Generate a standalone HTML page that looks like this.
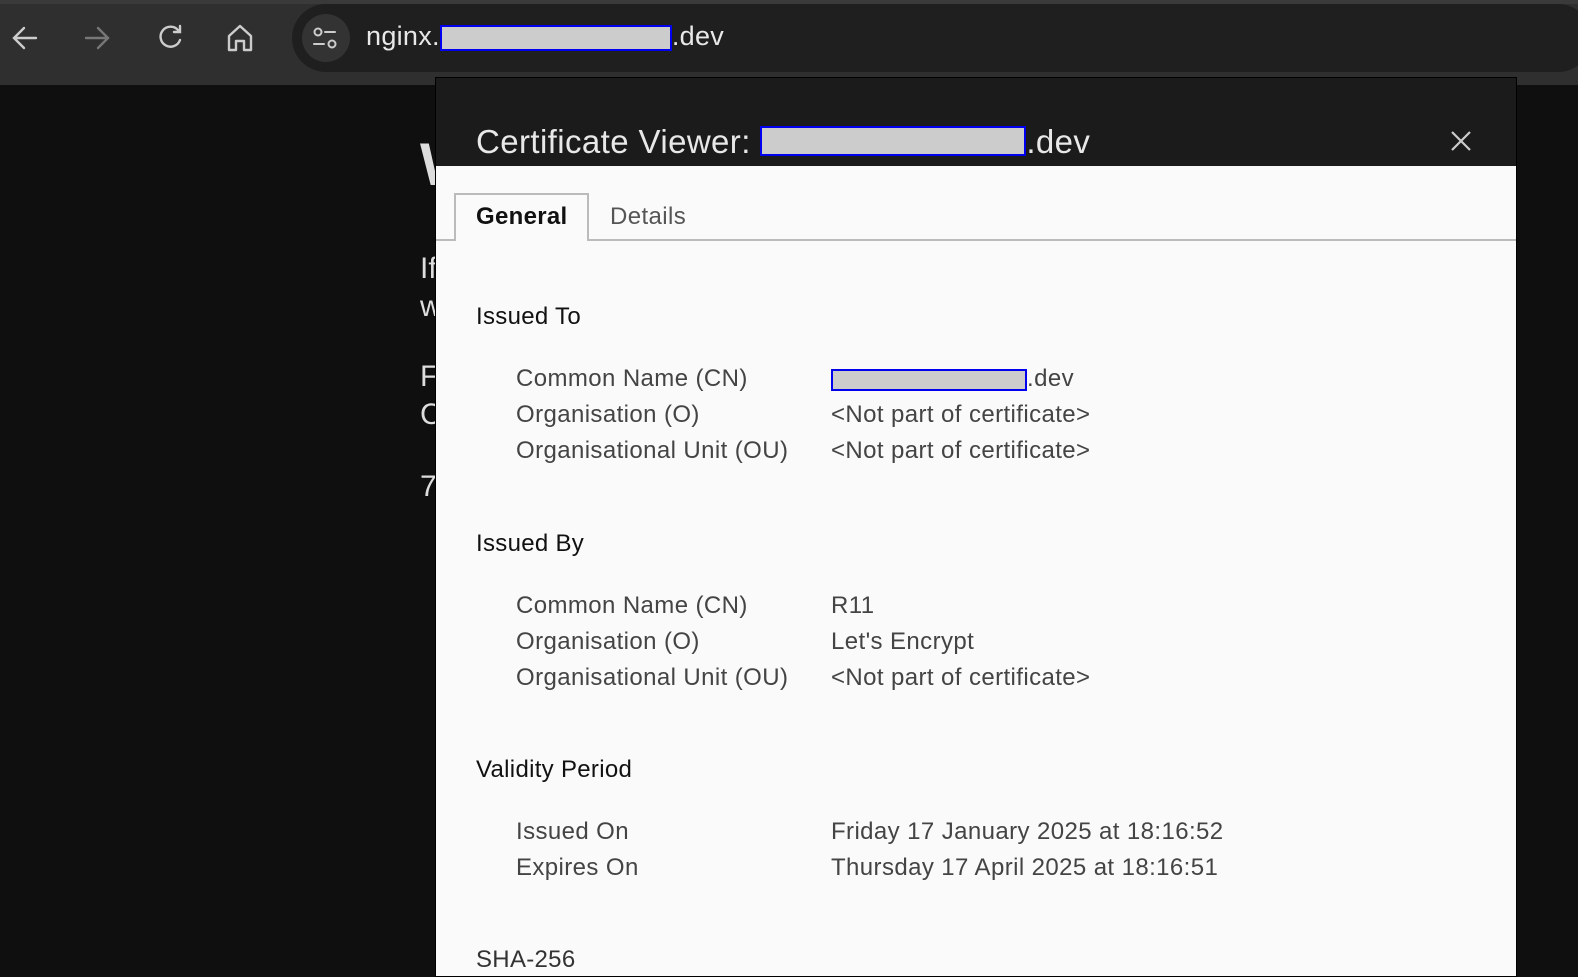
<!DOCTYPE html>
<html><head><style>
*{margin:0;padding:0;box-sizing:border-box}
body{width:1578px;height:958px;overflow:hidden;background:#0f0f0f;font-family:"Liberation Sans",sans-serif;position:relative}
.tb{position:absolute;left:0;top:0;width:1578px;height:85px;background:#2f2f2f;border-top:4px solid #3a3a3a}
.omni{position:absolute;left:292px;top:4px;width:1300px;height:68px;background:#1f1f1f;border-radius:34px}
.tune{position:absolute;left:302px;top:14px;width:48px;height:48px;border-radius:24px;background:#333}
.url{position:absolute;left:366px;top:21px;font-size:27px;color:#e8e8e8;letter-spacing:0.3px}
.red{display:inline-block;background:#ccc;border:2px solid #0000ee;vertical-align:middle}
.bg{position:absolute;color:#ddd;font-family:"Liberation Sans",sans-serif;font-size:30px;left:420px}
.dlg{position:absolute;left:435px;top:77px;width:1082px;height:900px;background:#fafafa;border:1px solid #000}
.hd{position:absolute;left:0;top:0;width:1080px;height:88px;background:#1b1b1b}
.title{position:absolute;left:40px;top:45px;font-size:33px;color:#e8e8e8;letter-spacing:0.4px}
.t{position:absolute;font-size:24px;color:#444;letter-spacing:0.4px}
.h{position:absolute;font-size:24px;color:#111;left:40px;letter-spacing:0.3px}
</style></head><body>
<div class="tb"></div>
<div class="omni"></div>
<div class="tune"></div>
<svg style="position:absolute;left:0;top:0" width="360" height="80" fill="none" stroke-width="2.4" stroke-linecap="round">
<path d="M36 38H14M24 28l-10 10 10 10" stroke="#ccc"/>
<path d="M86 38h22M98 28l10 10-10 10" stroke="#777"/>
<path d="M178 30a10 10 0 1 0 2 10M180 26v6h-6" stroke="#ccc"/>
<path d="M229 50V36l11-10 11 10v14h-7v-9h-8v9z" stroke="#ccc" stroke-linejoin="round"/>
<circle cx="318" cy="32" r="3.5" stroke="#ccc" stroke-width="2"/><path d="M325 32h10M314 44h10" stroke="#ccc" stroke-width="2"/><circle cx="332" cy="44" r="3.5" stroke="#ccc" stroke-width="2"/>
</svg>
<div class="url">nginx.<span class="red" style="width:232px;height:26px"></span>.dev</div>
<div class="bg" style="top:130px;font-size:60px;font-weight:bold">W</div>
<div class="bg" style="top:252px">If</div>
<div class="bg" style="top:290px">w</div>
<div class="bg" style="top:360px">F</div>
<div class="bg" style="top:398px">C</div>
<div class="bg" style="top:470px">7</div>
<div class="dlg">
<div class="hd">
<div class="title">Certificate Viewer: <span class="red" style="width:266px;height:30px;margin-top:-6px"></span>.dev</div>
<svg style="position:absolute;left:1014px;top:52px" width="22" height="22" stroke="#ccc" stroke-width="2.2"><path d="M2 2l18 18M20 2L2 20"/></svg>
</div>
<div style="position:absolute;left:0;top:161px;width:1080px;height:2px;background:#bbb"></div>
<div style="position:absolute;left:18px;top:115px;width:135px;height:48px;background:#fafafa;border:2px solid #bbb;border-bottom:none"></div>
<div style="position:absolute;left:40px;top:125px;font-size:24px;font-weight:bold;color:#111;letter-spacing:0.3px">General</div>
<div style="position:absolute;left:174px;top:125px;font-size:24px;color:#555;letter-spacing:0.4px">Details</div>
<div class="h" style="top:225px">Issued To</div>
<div class="t" style="left:80px;top:287px">Common Name (CN)</div><div class="t" style="left:395px;top:287px"><span class="red" style="width:196px;height:22px"></span>.dev</div>
<div class="t" style="left:80px;top:323px">Organisation (O)</div><div class="t" style="left:395px;top:323px">&lt;Not part of certificate&gt;</div>
<div class="t" style="left:80px;top:359px">Organisational Unit (OU)</div><div class="t" style="left:395px;top:359px">&lt;Not part of certificate&gt;</div>
<div class="h" style="top:452px">Issued By</div>
<div class="t" style="left:80px;top:514px">Common Name (CN)</div><div class="t" style="left:395px;top:514px">R11</div>
<div class="t" style="left:80px;top:550px">Organisation (O)</div><div class="t" style="left:395px;top:550px">Let's Encrypt</div>
<div class="t" style="left:80px;top:586px">Organisational Unit (OU)</div><div class="t" style="left:395px;top:586px">&lt;Not part of certificate&gt;</div>
<div class="h" style="top:678px">Validity Period</div>
<div class="t" style="left:80px;top:740px">Issued On</div><div class="t" style="left:395px;top:740px">Friday 17 January 2025 at 18:16:52</div>
<div class="t" style="left:80px;top:776px">Expires On</div><div class="t" style="left:395px;top:776px">Thursday 17 April 2025 at 18:16:51</div>
<div class="h" style="top:868px;color:#333">SHA-256</div>
</div>
</body></html>
